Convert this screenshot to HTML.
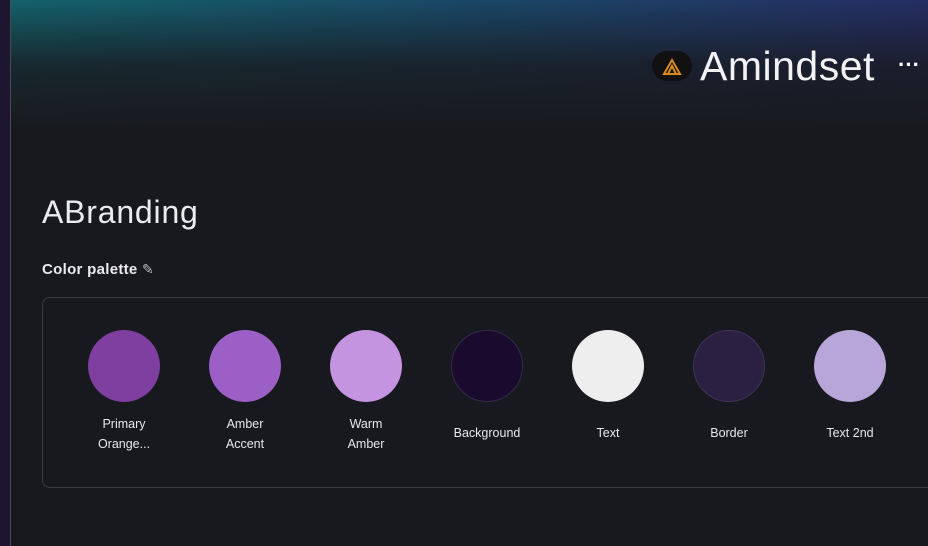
<!DOCTYPE html>
<html><head><style>
body{margin:0;width:928px;height:546px;overflow:hidden;background:#18191e;font-family:"Liberation Sans",sans-serif;position:relative}
.strip{position:absolute;left:0;top:0;width:10px;height:546px;background:#1e1530;border-right:1px solid #4a4b52}
.grad{position:absolute;left:11px;top:0;right:0;height:130px;background:linear-gradient(90deg,#13666f 0%,#1a4a6a 50%,#262f6a 100%);}
.grad:after{content:"";position:absolute;inset:0;background:linear-gradient(180deg,rgba(24,25,30,.05) 0%,rgba(24,25,30,.8) 50%,#18191e 100%)}
.logo{position:absolute;left:652px;top:51px;width:40px;height:30px;border-radius:15px;background:#111;}
.brand{position:absolute;left:700px;top:43px;font-size:41px;color:#f2f2f4;letter-spacing:0.5px}
.dots{position:absolute;left:898px;top:52px;color:#fff;font-size:22px;font-weight:bold;letter-spacing:0px}
h1{position:absolute;left:42px;top:194px;margin:0;font-weight:normal;font-size:32px;color:#ececef;letter-spacing:0.8px}
.cp{position:absolute;left:42px;top:261px;font-size:15px;font-weight:bold;color:#ececef;letter-spacing:.3px}
.card{position:absolute;left:42px;top:297px;width:900px;height:191px;border:1px solid #3b3c42;border-radius:8px;box-sizing:border-box}
.sw{position:absolute;top:330px;width:120px;text-align:center;color:#e8e8ea;font-size:12.5px;line-height:20px}
.c{width:72px;height:72px;border-radius:50%;margin:0 auto 12px;box-sizing:border-box}
</style></head><body>
<div class="strip"></div><div class="grad"></div>
<div class="logo"><svg width="40" height="30" viewBox="0 0 40 30"><path d="M12 23 L20 9 L28 23 Z M16 23 L20 15 L24 23" fill="none" stroke="#d88a1a" stroke-width="2"/></svg></div>
<div class="brand">Amindset</div>
<div class="dots">···</div>
<h1>ABranding</h1>
<div class="cp">Color palette <span style="font-weight:normal;color:#bbb;font-size:14px">✎</span></div>
<div class="card"></div>
<div class="sw" style="left:64px"><div class="c" style="background:#7e3fa0"></div>Primary<br>Orange...</div>
<div class="sw" style="left:185px"><div class="c" style="background:#9b5fc6"></div>Amber<br>Accent</div>
<div class="sw" style="left:306px"><div class="c" style="background:#c594e0"></div>Warm<br>Amber</div>
<div class="sw" style="left:427px"><div class="c" style="background:#190a2e;border:1px solid #34294a"></div><div style="padding-top:9px">Background</div></div>
<div class="sw" style="left:548px"><div class="c" style="background:#eeeeee"></div><div style="padding-top:9px">Text</div></div>
<div class="sw" style="left:669px"><div class="c" style="background:#2b1f42;border:1px solid #3e3358"></div><div style="padding-top:9px">Border</div></div>
<div class="sw" style="left:790px"><div class="c" style="background:#b9a6d8"></div><div style="padding-top:9px">Text 2nd</div></div>
</body></html>
